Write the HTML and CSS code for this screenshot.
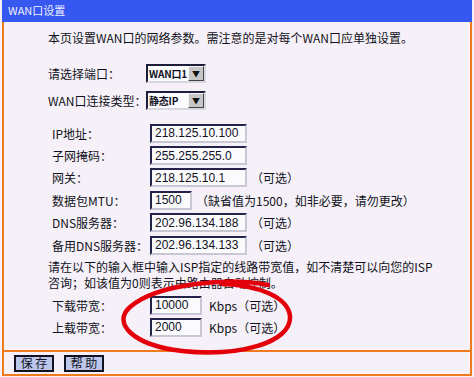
FILE: index.html
```html
<!DOCTYPE html>
<html lang="zh-CN">
<head>
  <meta charset="UTF-8" />
  <title>WAN口设置</title>
  <link rel="stylesheet" href="styles.css">
</head>
<body>

  <div class="panel">
    <div class="title">WAN口设置</div>

    <div class="content">
      <p class="intro">本页设置WAN口的网络参数。需注意的是对每个WAN口应单独设置。</p>

      <div class="pick-row">
        <span class="pick-label">请选择端口：</span>
        <span class="fake-select"><span class="sel-text">WAN口1</span><span class="sel-btn">&#9660;</span></span>
      </div>
      <div class="pick-row">
        <span class="pick-label">WAN口连接类型：</span>
        <span class="fake-select"><span class="sel-text">静态IP</span><span class="sel-btn">&#9660;</span></span>
      </div>

      <div class="fields">
        <div class="row"><span class="label">IP地址：</span><input class="box" value="218.125.10.100"></div>
        <div class="row"><span class="label">子网掩码：</span><input class="box" value="255.255.255.0"></div>
        <div class="row"><span class="label">网关：</span><input class="box" value="218.125.10.1"><span class="note">（可选）</span></div>
        <div class="row"><span class="label">数据包MTU：</span><input class="box short" value="1500"><span class="note">（缺省值为1500，如非必要，请勿更改）</span></div>
        <div class="row"><span class="label">DNS服务器：</span><input class="box" value="202.96.134.188"><span class="note">（可选）</span></div>
        <div class="row"><span class="label">备用DNS服务器：</span><input class="box" value="202.96.134.133"><span class="note">（可选）</span></div>
      </div>

      <p class="hint">请在以下的输入框中输入ISP指定的线路带宽值，如不清楚可以向您的ISP<br>咨询；如该值为0则表示由路由器自动控制。</p>

      <div class="fields bw">
        <div class="row"><span class="label">下载带宽：</span><input class="box mid" value="10000"><span class="unit">Kbps（可选）</span></div>
        <div class="row"><span class="label">上载带宽：</span><input class="box mid" value="2000"><span class="unit">Kbps（可选）</span></div>
      </div>
    </div>

    <div class="actions">
      <button class="btn">保 存</button>
      <button class="btn">帮 助</button>
    </div>
  </div>

  <svg class="circle" width="190" height="80" viewBox="0 0 190 80">
    <path d="M150 6 C 112 -2, 40 4, 12 28 C -6 44, 14 66, 64 72 C 120 78, 174 64, 172 37 C 170 18, 140 6, 104 5" fill="none" stroke="#e3000b" stroke-width="4.5" stroke-linecap="round"/>
  </svg>

</body>
</html>
```

FILE: styles.css
```css
body {
  margin: 0;
  padding: 0;
  background: #f6f1f8;
  font-family: "Noto Sans CJK SC", "Liberation Sans", sans-serif;
  font-size: 12px;
  color: #111122;
  width: 474px;
  height: 377px;
  position: relative;
  overflow: hidden;
}

.panel {
  margin-left: 2px;
  width: 470px;
}

.title {
  height: 22px;
  line-height: 20px;
  background: #3657f0;
  color: #eef0ff;
  font-size: 11px;
  padding-left: 6px;
  box-sizing: border-box;
}

.content {
  border-left: 2px solid #f07a1c;
  border-right: 2px solid #f07a1c;
  border-bottom: 2px solid #f07a1c;
  padding: 8px 0 12px 0;
}

.intro {
  margin: 0 0 0 44px;
  line-height: 16px;
  white-space: nowrap;
}

.pick-row {
  display: flex;
  align-items: center;
  height: 27px;
  padding-left: 44px;
}

.pick-row:first-of-type {
  margin-top: 14px;
}

.pick-label {
  width: 98px;
  flex-shrink: 0;
  white-space: nowrap;
}

.fake-select {
  display: flex;
  width: 60px;
  height: 19px;
  border: 2px solid #1e1e3c;
  border-right-color: #d8d8e0;
  border-bottom-color: #d8d8e0;
  background: #fcfcff;
  box-sizing: border-box;
}

.sel-text {
  flex: 1;
  padding-left: 1px;
  line-height: 15px;
  font-size: 10px;
  font-weight: bold;
  letter-spacing: -0.2px;
  white-space: nowrap;
}

.sel-btn {
  width: 16px;
  background: #c8c6c8;
  border: 1px solid #f4f4f4;
  border-right-color: #444;
  border-bottom-color: #444;
  font-size: 8px;
  line-height: 13px;
  text-align: center;
  color: #111;
  box-sizing: border-box;
}

.fields {
  margin-top: 8px;
  padding-left: 48px;
}

.row {
  display: flex;
  align-items: center;
  height: 22.4px;
}

.label {
  width: 98px;
  flex-shrink: 0;
  white-space: nowrap;
}

.box {
  width: 97px;
  height: 19px;
  border: 2px solid #24244a;
  border-right-color: #c8c8d4;
  border-bottom-color: #c8c8d4;
  background: #fbfbfe;
  padding: 0 3px;
  box-sizing: border-box;
  font-family: "Liberation Sans", sans-serif;
  font-size: 12px;
  color: #111122;
  outline: none;
}

.box.short {
  width: 42px;
}

.box.mid {
  width: 52px;
}

.note {
  margin-left: 4px;
  white-space: nowrap;
}

.hint {
  margin: 3px 0 0 44px;
  line-height: 16px;
  white-space: nowrap;
}

.fields.bw {
  margin-top: 3px;
}

.fields.bw .row {
  height: 22px;
}

.unit {
  margin-left: 7px;
  white-space: nowrap;
}

.actions {
  display: flex;
  gap: 10px;
  height: 22px;
  align-items: center;
  padding-left: 10px;
  border-left: 2px solid #f07a1c;
  border-right: 2px solid #f07a1c;
  border-bottom: 2px solid #f07a1c;
}

.btn {
  width: 40px;
  height: 17px;
  padding: 0;
  background: #bcc6ea;
  border: 2px solid #111122;
  font-family: "Noto Sans CJK SC", sans-serif;
  font-size: 12px;
  line-height: 12px;
  color: #111122;
}

.circle {
  position: absolute;
  left: 118px;
  top: 279px;
}
```
